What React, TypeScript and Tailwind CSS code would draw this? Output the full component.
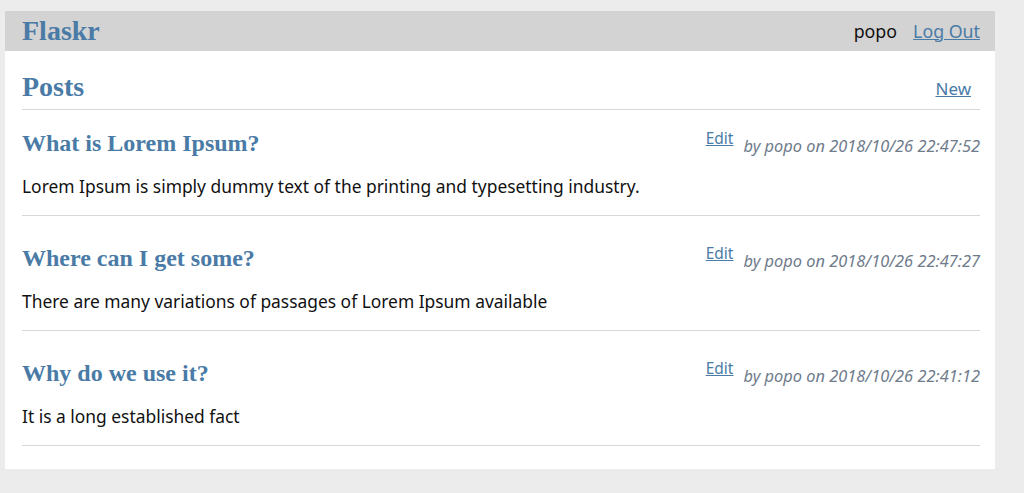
import React from 'react';

interface Post {
  title: string;
  author: string;
  created: string;
  body: string;
}

const posts: Post[] = [
  {
    title: 'What is Lorem Ipsum?',
    author: 'popo',
    created: '2018/10/26 22:47:52',
    body: 'Lorem Ipsum is simply dummy text of the printing and typesetting industry.',
  },
  {
    title: 'Where can I get some?',
    author: 'popo',
    created: '2018/10/26 22:47:27',
    body: 'There are many variations of passages of Lorem Ipsum available',
  },
  {
    title: 'Why do we use it?',
    author: 'popo',
    created: '2018/10/26 22:41:12',
    body: 'It is a long established fact',
  },
];

const serif = "font-['Liberation_Serif',serif]";

const PostItem = ({ post, first }: { post: Post; first: boolean }) => (
  <article className={first ? 'pt-[19px]' : 'pt-[28px]'}>
    <header className="flex items-start">
      <h2 className={`${serif} flex-auto text-[24px] leading-[28px] font-bold text-[#4a7ba6]`}>
        {post.title}
      </h2>
      <a href="#" className="mt-[-1px] text-[15.5px] leading-[20px] text-[#4a7ba6] underline">
        Edit
      </a>
      <div className="ml-[10px] mt-[7px] text-[16.4px] leading-[20px] italic text-[#6f7c8c]">
        by {post.author} on {post.created}
      </div>
    </header>
    <p className="mt-[17px] text-[17.4px] leading-[24px] text-[#111]">{post.body}</p>
    <hr className="mt-[17px] border-0 border-t border-[#d8d8d8]" />
  </article>
);

export default function App() {
  return (
    <div className="min-h-screen bg-[#ececec] pt-[11px] pl-[5px] font-['Noto_Sans',sans-serif]">
      <div className="w-[990px] h-[458px] bg-white">
        <nav className="h-[40px] bg-[#d3d3d3] flex items-center pl-[17px] pr-[15px]">
          <h1 className={`${serif} flex-auto text-[28px] leading-[28px] font-bold text-[#4a7ba6]`}>
            Flaskr
          </h1>
          <span className="text-[17.8px] text-[#111]">popo</span>
          <a href="#" className="ml-[16px] text-[17.8px] text-[#4a7ba6] underline">
            Log Out
          </a>
        </nav>
        <div className="pl-[17px] pr-[15px]">
          <header className="h-[59px] flex items-end border-b border-[#d8d8d8]">
            <h1 className={`${serif} flex-auto mb-[8px] text-[28px] leading-[28px] font-bold text-[#4a7ba6]`}>
              Posts
            </h1>
            <a href="#" className="mr-[9px] mb-[9px] text-[17px] leading-[22px] text-[#4a7ba6] underline">
              New
            </a>
          </header>
          {posts.map((post, i) => (
            <PostItem key={post.title} post={post} first={i === 0} />
          ))}
        </div>
      </div>
    </div>
  );
}
